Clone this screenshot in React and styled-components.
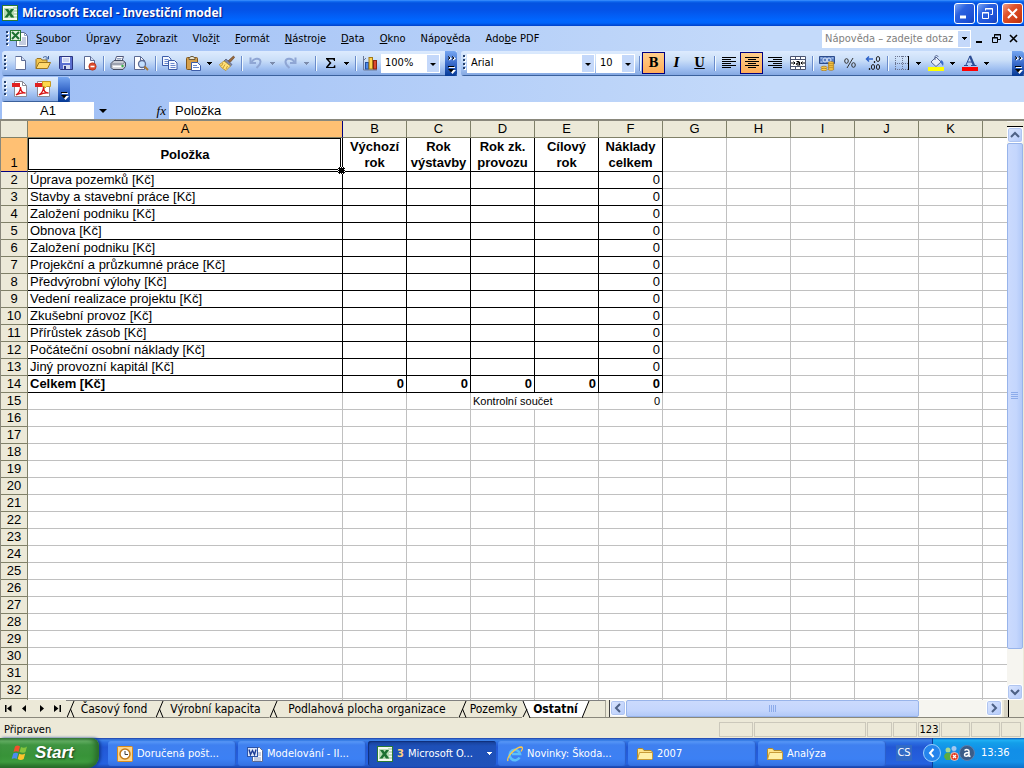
import React from 'react';
import styled, { createGlobalStyle, css } from 'styled-components';

const UI = '"DejaVu Sans Condensed", "DejaVu Sans", sans-serif';
const SHEET = '"Liberation Sans", Arial, sans-serif';

const Global = createGlobalStyle`
  * { box-sizing: border-box; }
  body { margin: 0; overflow: hidden; font: 11px/16px ${UI}; font-stretch: condensed; color: #000; }
  button, input, select { font: inherit; font-stretch: inherit; color: inherit; margin: 0; padding: 0; border: 0; border-radius: 0; background: none; }
  svg { display: block; flex: none; }
`;

const Window = styled.main`
  display: flex;
  flex-direction: column;
  height: 100vh;
  background: #ece9d8;
`;

const TitleBar = styled.header`
  flex: none;
  display: flex;
  align-items: center;
  gap: 4px;
  height: 26px;
  padding: 0 1px 0 2px;
  background: linear-gradient(#4a9aff 0, #1673f5 1px, #0453e0 3px, #0453e8 10px, #0066ff 20px, #0064fa 23px, #0040c8 26px);
`;
const Title = styled.h1`
  flex: 1;
  margin: 0;
  font: bold 12px/20px "Noto Sans", "Open Sans", sans-serif;
  color: #fff;
  text-shadow: 1px 1px 1px #0a1883;
`;
const Caption = styled.button`
  width: 21px;
  height: 21px;
  margin-left: ${p => (p.$close ? 2 : 0)}px;
  border: 1px solid #fff;
  border-radius: 3px;
  display: grid;
  place-items: center;
  background: ${p => p.$close
    ? 'linear-gradient(135deg, #f0a088 0, #e0532c 35%, #cc3a12 80%, #b03010 100%)'
    : 'linear-gradient(135deg, #7ba6f4 0, #2c62e0 35%, #1c4fd4 80%, #1640b0 100%)'};
`;
const CaptionGroup = styled.div`display: flex; gap: 2px;`;

const Docks = styled.div`
  flex: none;
  background: linear-gradient(90deg, #9ebef5, #c4dafa 75%);
`;
const MenuBar = styled.nav`
  display: flex;
  align-items: center;
  height: 25px;
  padding: 0 2px 0 4px;
`;
const MenuItem = styled.button`
  height: 20px;
  padding: 0 7px 0 8px;
  white-space: nowrap;
`;
const Spacer = styled.div`flex: 1;`;
const HelpBox = styled.div`
  display: flex;
  width: 149px;
  height: 18px;
  background: #fff;
  border: 1px solid #fff;
  input { flex: 1; min-width: 0; padding: 0 2px; outline: 0; }
  input::placeholder { color: #808080; opacity: 1; }
`;
const DropButton = styled.button`
  width: 12px;
  display: grid;
  place-items: center;
  background: #c4d8fa;
`;
const DocButton = styled.button`
  width: 17px;
  height: 17px;
  display: grid;
  place-items: center;
`;

const BarRow = styled.div`
  display: flex;
  gap: 4px;
  padding: 0 0 ${p => (p.$last ? 0 : 1)}px 2px;
`;
const Bar = styled.div`
  display: flex;
  align-items: center;
  flex: ${p => (p.$grow ? '1' : 'none')};
  height: 25px;
  padding-bottom: 1px;
  border-radius: 3px 0 0 3px;
  background: linear-gradient(#ddebfe 0, #cbdff8 9px, #a3c2f2 17px, #84a8e2 24px, #3b619c 24px);
`;
const GripBox = styled.span`
  width: 6px;
  height: 17px;
  padding-left: 2px;
  display: flex;
  align-items: center;
`;
const ToolButton = styled.button`
  width: 23px;
  height: 22px;
  display: grid;
  place-items: center;
  ${p => p.$on && css`
    border: 1px solid #000080;
    background: linear-gradient(#ffcf8c, #ffac58);
  `}
`;
const ToolArrow = styled.button`
  width: 11px;
  height: 22px;
  display: grid;
  place-items: center;
`;
const Sep = styled.span`
  width: 6px;
  height: 15px;
  display: flex;
  justify-content: center;
  &::before { content: ""; width: 1px; background: #6a8ccb; box-shadow: 1px 0 #f1f9ff; }
`;
const Combo = styled.div`
  position: relative;
  width: ${p => p.$width}px;
  height: 19px;
  margin-right: 1px;
  border: 1px solid #fff;
  background: #fff;
  select { width: 100%; height: 17px; padding-left: 3px; appearance: none; outline: 0; }
  svg { position: absolute; right: 0; top: 0; pointer-events: none; }
`;
const BarEnd = styled.button`
  align-self: flex-start;
  flex: none;
  width: 12px;
  height: 25px;
  margin-left: ${p => (p.$push ? 'auto' : '4px')};
  border-radius: 0 3px 3px 0;
  background: linear-gradient(#75a6f1, #3a6bcb 50%, #053995);
  display: grid;
  place-items: center;
`;

const FormulaBar = styled.div`
  display: flex;
  height: 19px;
  padding: 0 0 0 2px;
  border-bottom: 2px solid #8a887c;
  font: 13px/16px ${SHEET};
`;
const NameBox = styled.input`
  width: 92px;
  background: #fff;
  text-align: center;
  outline: 0;
`;
const NameDrop = styled.button`width: 18px; display: grid; place-items: center;`;
const FxButton = styled.button`
  width: 57px;
  padding: 0 3px 0 0;
  text-align: right;
  font: italic 13px/16px "Liberation Serif", serif;
`;
const FormulaInput = styled.input`
  flex: 1;
  min-width: 0;
  padding-left: 6px;
  background: #fff;
  outline: 0;
`;

const Work = styled.div`
  flex: 1;
  min-height: 0;
  display: flex;
  border-left: 1px solid #8a887c;
`;
const GridView = styled.div`
  flex: 1;
  min-width: 0;
  overflow: hidden;
  background: #fff;
`;
const Sheet = styled.table`
  table-layout: fixed;
  width: 1110px;
  border-collapse: separate;
  border-spacing: 0;
  font: 13px/16px ${SHEET};
`;
const Head = styled.th`
  height: ${p => (p.$tall ? 34 : 17)}px;
  padding: 0;
  vertical-align: bottom;
  font-weight: normal;
  background: ${p => (p.$on ? '#ffc073' : '#ece9d8')};
  border-right: 1px solid ${p => (p.$on && !p.$tall ? '#000080' : '#808068')};
  border-bottom: 1px solid ${p => (p.$on && p.$tall ? '#000080' : '#808068')};
`;
const Cell = styled.td`
  position: relative;
  height: 17px;
  padding: 0 2px;
  white-space: nowrap;
  text-align: ${p => p.$align || 'left'};
  font-weight: ${p => (p.$bold ? 'bold' : 'normal')};
  font-size: ${p => (p.$small ? 11 : 13)}px;
  border-right: 1px solid ${p => (p.$box ? '#000' : '#c0c0c0')};
  border-bottom: 1px solid ${p => (p.$box ? '#000' : '#c0c0c0')};
`;
const HeadingCell = styled(Cell)`
  padding: 0;
  font-weight: bold;
  text-align: center;
  height: 34px;
  white-space: ${p => (p.$picked ? 'nowrap' : 'pre-line')};
`;
const Selection = styled.span`
  position: absolute;
  inset: 0 1px 1px 0;
  border: 1px solid #000;
  &::after {
    content: "";
    position: absolute;
    right: -5px;
    bottom: -5px;
    width: 5px;
    height: 5px;
    background: #000;
    border: 1px dotted #fff;
    z-index: 2;
  }
`;

const VScroll = styled.div`
  flex: none;
  width: 17px;
  display: flex;
  flex-direction: column;
  background: #f6f5f0;
  border-right: 1px solid #ece9d8;
`;
const Splitter = styled.div`
  height: 5px;
  margin-top: 1px;
  background: #ece9d8;
  border-bottom: 1px solid #000;
`;
const ScrollButton = styled.button`
  flex: none;
  width: 16px;
  height: 16px;
  border: 1px solid #fff;
  border-radius: 3px;
  background: linear-gradient(135deg, #dbe6fe, #b4cafa);
  box-shadow: inset 0 0 0 1px #b0c5f0;
  display: grid;
  place-items: center;
`;
const Thumb = styled.div`
  flex: ${p => p.$share};
  border: 1px solid #98b4ea;
  border-radius: 2px;
  background: linear-gradient(${p => (p.$vertical ? '90deg' : '180deg')}, #cbdafd, #c4d6fd 60%, #b2c9f8);
  display: grid;
  place-items: center;
`;
const Track = styled.div`flex: ${p => p.$share};`;

const SheetBar = styled.div`
  flex: none;
  display: flex;
  height: 18px;
  border-bottom: 1px solid #8a887c;
  font-size: 12px;
`;
const NavButtons = styled.div`
  display: flex;
  width: 66px;
  button { flex: 1; display: grid; place-items: center; }
`;
const TabStrip = styled.div`
  display: flex;
  flex: none;
  width: 540px;
  border-right: 1px solid #a8a698;
  margin-right: 3px;
  border-top: 1px solid #808080;
`;
const Tab = styled.button`
  display: flex;
  width: ${p => p.$width}px;
  line-height: 16px;
  white-space: nowrap;
  font-weight: ${p => (p.$on ? 'bold' : 'normal')};
  background: ${p => (p.$on ? '#fff' : 'none')};
  span { flex: 1; text-align: center; margin: 0 -3px 0 -5px; }
`;
const HScroll = styled.div`
  flex: 1;
  display: flex;
  background: #f6f5f0;
  border-left: 1px solid #404040;
`;
const Corner = styled.div`
  width: 22px;
  padding-left: 2px;
  display: flex;
  &::before { content: ""; width: 4px; background: #d8d4c4; border-right: 1px solid #000; }
`;

const StatusBar = styled.footer`
  flex: none;
  display: flex;
  align-items: center;
  gap: 1px;
  height: 20px;
  padding: 4px 3px 1px 4px;
`;
const Pane = styled.span`
  width: ${p => p.$width}px;
  height: 15px;
  line-height: 13px;
  text-align: center;
  border: 1px solid #cbc8bb;
`;

const TaskBar = styled.nav`
  flex: none;
  display: flex;
  height: 30px;
  color: #fff;
  background: linear-gradient(#1f3fa6 0, #3d83e8 2px, #2b6be0 5px, #2258d5 9px, #245ddb 17px, #2562df 26px, #1941a5 30px);
`;
const Start = styled.button`
  width: 99px;
  display: flex;
  align-items: center;
  gap: 5px;
  padding-left: 11px;
  border-radius: 0 8px 12px 0;
  background: linear-gradient(#3a7a3c 0, #65b165 3px, #3e9440 7px, #389338 18px, #3d9a3e 24px, #246a26 30px);
  box-shadow: inset -4px 0 5px #2a6c2c, 2px 0 3px #123c98;
  font: italic bold 17px/26px "Liberation Sans", sans-serif;
  text-shadow: 1px 1px 2px #1c3c1c;
`;
const Tasks = styled.div`
  flex: 1;
  min-width: 0;
  display: flex;
  gap: 2px;
  padding: 3px 0 2px 9px;
`;
const Task = styled.button`
  width: 128px;
  display: flex;
  align-items: center;
  gap: 4px;
  padding: 0 4px 0 9px;
  border-radius: 3px;
  text-align: left;
  white-space: nowrap;
  background: ${p => (p.$on
    ? 'linear-gradient(#173f95, #1e50b8 5px, #1f52ba)'
    : 'linear-gradient(#5a9af8, #3f80f0 4px, #3c80f4 18px, #3470e0)')};
  box-shadow: ${p => (p.$on ? 'inset 1px 1px 1px #0f2f7a' : 'inset -1px 0 1px #2a5cc8')};
  b { color: #ffcf80; }
  span { flex: 1; }
`;
const Lang = styled.span`
  align-self: center;
  width: 16px;
  margin-right: 20px;
  background: #316ac5;
  text-align: center;
`;
const Tray = styled.div`
  display: flex;
  align-items: center;
  width: 92px;
  background: linear-gradient(#0c59b9 0, #1fb0f4 2px, #139ee9 5px, #118fe8 12px, #1290e8 24px, #0c6fc8 30px);
  box-shadow: inset 1px 0 #0a3f98;
  time { margin-left: 6px; }
`;
const TrayToggle = styled.button`margin-left: -10px; margin-right: 1px;`;

/* ---------- drawings ---------- */
const Svg = ({ w = 16, h = w, children, ...rest }) => (
  <svg width={w} height={h} viewBox={`0 0 ${w} ${h}`} fill="none" aria-hidden="true" {...rest}>{children}</svg>
);
const Down = ({ color = '#000' }) => <Svg w={5} h={3} shapeRendering="crispEdges"><path d="M0 0h5L2.5 3z" fill={color} /></Svg>;
const ComboArrow = () => (
  <Svg w={12} h={17}><path d="M0 0h12v17H0z" fill="#c4d8fa" /><path d="M3 8h6L6 11z" fill="#000" /></Svg>
);
const Grip = () => (
  <GripBox><Svg w={3} h={16} shapeRendering="crispEdges">
    {[0, 4, 8, 12].map(y => <g key={y}><path d={`M1 ${y + 1}h2v2h-2z`} fill="#fff" /><path d={`M0 ${y}h2v2h-2z`} fill="#27416d" /></g>)}
  </Svg></GripBox>
);
const MoreMark = ({ chevron }) => (
  <Svg w={9} h={21}>
    {chevron && <><path d="M2 4l2 1.500-2 1.500M6 4l2 1.500-2 1.500" stroke="#fff" strokeWidth="1.200" /><path d="M1 3.500l2 1.500-2 1.500M5 3.500l2 1.500-2 1.500" stroke="#000" /></>}
    <path d="M2 14.500h6" stroke="#fff" /><path d="M1 13.500h6" stroke="#000" />
    <path d="M2 17h7l-3.500 4z" fill="#fff" /><path d="M1 16h6l-3 3.500z" fill="#000" />
  </Svg>
);
const ExcelIcon = () => (
  <Svg><rect x=".5" y=".5" width="15" height="15" fill="#f4faf0" stroke="#2a7a34" />
    <path d="M11 3h4M11 6h4M11 9h4M11 12h4" stroke="#8fbf8f" /><rect x="2" y="3" width="10" height="10" fill="#b8dcb4" />
    <path d="M3 4h3.200l1.300 2L9 4h3L9.200 8l3 4.500H9L7.300 10l-1.800 2.500H2.500L5.800 8z" fill="#1d7031" /></Svg>
);
const ExcelDoc = () => (
  <Svg w={18} h={17}><path d="M6.500 2.500h8l3 3v11h-11z" fill="#fff" stroke="#5a6a92" /><path d="M14.500 2.500v3h3M12 8h4M12 10h4M9 12h7M9 14h7" stroke="#8a9ac2" />
    <rect x=".5" y=".5" width="10" height="10" fill="#e2f2df" stroke="#2a7a34" /><path d="M2 2l7 7M9 2L2 9" stroke="#1d7031" strokeWidth="2" /></Svg>
);
const page = <path d="M3.500 1.500h6l4 4v9h-10z" fill="#fff" stroke="#5b6a94" />;
const NewIcon = () => <Svg>{page}<path d="M9.500 1.500v4h4" fill="#cfdcf4" stroke="#5b6a94" /><path d="M3.500 1.500v13" stroke="#a8b8dc" /></Svg>;
const OpenIcon = () => (
  <Svg><path d="M1 13.500V4.500l1-1h4l1 1.500h5v3" fill="#f3c64e" stroke="#9a7420" /><path d="M1 13.500l3-6h11.500l-3 6z" fill="#ffd96e" stroke="#9a7420" /><path d="M8 2.500c2-1.500 4-1 5 1M13.500 1v3h-3" stroke="#3b5e9a" /></Svg>
);
const SaveIcon = () => (
  <Svg><path d="M1.500 1.500h13v13h-12l-1-1z" fill="#5b6fd0" stroke="#2b3580" /><rect x="4" y="2" width="8" height="6" fill="#eef2ff" /><path d="M5 4h6M5 6h6" stroke="#a8b4e0" /><rect x="5" y="10" width="7" height="4" fill="#d4daf0" /><rect x="6" y="11" width="2" height="3" fill="#2b3580" /></Svg>
);
const PermIcon = () => (
  <Svg>{page}<path d="M9.500 1.500v4h4" fill="#cfdcf4" stroke="#5b6a94" /><circle cx="11.500" cy="11.500" r="3.700" fill="#dc4a2c" stroke="#a82c14" strokeWidth=".6" /><path d="M9.500 11.500h4" stroke="#fff" strokeWidth="1.600" /></Svg>
);
const PrintIcon = () => (
  <Svg><path d="M5 6l1.500-4.500h7L12 6" fill="#fff" stroke="#51597c" /><path d="M7 3.500h4.500M6.500 5h4.500" stroke="#90a0c0" /><path d="M1 8.500l3-3h9l2.500 2v4l-2.500 3H3l-2-2z" fill="#c9ccd4" stroke="#454c62" /><path d="M1.500 9h11l2.500-2" stroke="#70788c" /><path d="M3 11.500h9" stroke="#fff" strokeWidth="1.500" /><circle cx="12.500" cy="11" r="1.200" fill="#39b54a" /></Svg>
);
const PreviewIcon = () => (
  <Svg><path d="M1.500 1.500h6l4 4v9h-10z" fill="#fff" stroke="#5b6a94" /><path d="M7.500 1.500v4h4" stroke="#5b6a94" /><circle cx="9" cy="9" r="3.500" fill="#c4e0ff" stroke="#5b6a94" strokeWidth="1.300" /><path d="M11.500 11.500l3.500 3.500" stroke="#a87834" strokeWidth="2" /></Svg>
);
const CopyIcon = () => (
  <Svg>{[[.5, 1.500], [6.500, 5.500]].map(([x, y]) => (
    <g key={x} transform={`translate(${x} ${y})`}><path d="M0 0h6l2.500 2.500V9H0z" fill="#f4f8ff" stroke="#3c5ca8" /><path d="M2 3h4M2 5h5M2 7h5" stroke="#6a88cc" /></g>
  ))}</Svg>
);
const PasteIcon = () => (
  <Svg><rect x="1.500" y="2.500" width="11" height="12" rx="1" fill="#d6a04a" stroke="#80561c" /><path d="M4 4.500V3l2-1.500h2L10 3v1.500z" fill="#e9e4d0" stroke="#6a5a3c" /><path d="M6.500 7.500h6l3 3v5h-9z" fill="#fff" stroke="#3c5ca8" /><path d="M8 10.500h4M8 12.500h6" stroke="#6a88cc" /></Svg>
);
const BrushIcon = () => (
  <Svg><path d="M14.500 1l1 1.500-4.500 5-2-1.500z" fill="#9a6a3c" stroke="#6a4422" strokeWidth=".7" /><path d="M7 4l6 5.500-1.500 1.500L5 6z" fill="#8088a4" stroke="#4c526e" strokeWidth=".7" /><path d="M5 6l6.500 5-4.500 4.500C4 14 1.500 12 .5 9.500z" fill="#ffe27a" stroke="#b08a2c" strokeWidth=".8" /><path d="M4 8l-1.500 3M6 9.500L4 13M8.500 11L7 14" stroke="#c89a30" /></Svg>
);
const UndoIcon = ({ flip }) => (
  <Svg transform={flip ? 'scale(-1 1)' : undefined}><path d="M3.500 7C6 3 12 2.500 12.500 6.500c.3 3-2 4.500-4 6.500" stroke="#8fa6d4" strokeWidth="2" /><path d="M2.500 2.500V8H8" stroke="#8fa6d4" strokeWidth="2" /></Svg>
);
const SigmaIcon = () => <Svg><path d="M4 3h9v3h-1c-.2-1.300-.8-1.600-2-1.600H6.500L9.500 8l-3.500 4h4.300c1.200 0 1.700-.5 2-1.800h1V13H4v-1l3.500-4.200L4 4z" fill="#000" /></Svg>;
const ChartIcon = () => (
  <Svg><path d="M1.500 1v14H15" stroke="#6b7896" /><path d="M1.500 5.500L4 3" stroke="#6b7896" />
    <rect x="3.500" y="7.500" width="3" height="6.500" fill="#4a86e8" stroke="#24509c" /><rect x="7" y="2.500" width="3.500" height="11.500" fill="#ffd34e" stroke="#a07818" /><rect x="11.500" y="5.500" width="3" height="8.500" fill="#dc4a2c" stroke="#8c2410" /></Svg>
);
const Letter = styled.span`
  font: bold 12px/16px "DejaVu Serif", "Liberation Serif", serif;
  font-style: ${p => (p.$italic ? 'italic' : 'normal')};
  text-decoration: ${p => (p.$under ? 'underline' : 'none')};
`;
const AlignIcon = ({ rows }) => (
  <Svg shapeRendering="crispEdges"><path d={rows.map(([x, w], i) => `M${x} ${2.5 + i * 2}h${w}`).join('')} stroke="#000" /></Svg>
);
const LEFT = [[1, 14], [1, 9], [1, 14], [1, 9], [1, 14], [1, 9]];
const CENTER = [[1, 14], [4, 8], [1, 14], [4, 8], [1, 14], [4, 8]];
const RIGHT = [[1, 14], [6, 9], [1, 14], [6, 9], [1, 14], [6, 9]];
const MergeIcon = () => (
  <Svg><path d="M.5 1.500h15v13H.5zM.5 4.500h15M.5 11.500h15M5.500 1.500v3M10.500 1.500v3M5.500 11.500v3M10.500 11.500v3" fill="#fff" stroke="#4a5470" /><path d="M1 8h4M11 8h4M3.500 6.500L5 8 3.500 9.500M12.500 6.500L11 8l1.500 1.500" stroke="#000" /><path d="M6.500 6.500h2l1 1v2.500h-2l-1-1 1-1h2" stroke="#000" strokeWidth="1.200" /></Svg>
);
const MoneyIcon = () => (
  <Svg><path d="M.5 1.500h15v7H.5z" fill="#5a80c4" stroke="#2c4c8c" /><circle cx="6" cy="5" r="2" fill="#5a80c4" stroke="#dce8fc" /><circle cx="10" cy="5" r="2" stroke="#dce8fc" /><path d="M1.500 3h2M12.500 3h2M1.500 7h2" stroke="#c4d8fa" />
    {[[12, 8], [12, 10], [12, 12], [12, 14], [5, 12.500], [5, 14.500]].map(([x, y]) => <ellipse key={`${x}-${y}`} cx={x} cy={y} rx="3" ry="1.300" fill="#ffcf4a" stroke="#a87414" strokeWidth=".7" />)}</Svg>
);
const PercentIcon = () => <Svg><ellipse cx="4.500" cy="6" rx="1.800" ry="2.300" stroke="#333" /><ellipse cx="11.500" cy="10" rx="1.800" ry="2.300" stroke="#333" /><path d="M11 3L5 13" stroke="#333" /></Svg>;
const DecimalIcon = () => (
  <Svg><path d="M8 4H1.500M4 1.500L1.500 4 4 6.500" stroke="#2c62c8" strokeWidth="1.500" /><ellipse cx="13" cy="4" rx="1.700" ry="2.500" stroke="#222" /><path d="M9.500 6v2M4.500 13v2" stroke="#222" strokeWidth="1.300" /><ellipse cx="8" cy="12" rx="1.600" ry="2.500" stroke="#222" /><ellipse cx="13" cy="12" rx="1.600" ry="2.500" stroke="#222" /></Svg>
);
const BorderIcon = () => <Svg shapeRendering="crispEdges"><path d="M1 1.500h13M1 8h13M1 14.500h13M1.500 1v14M8 1v14" stroke="#6a7490" strokeDasharray="1 1" /><path d="M14.500 1v14" stroke="#000" /></Svg>;
const FillIcon = () => (
  <Svg><path d="M3 7l5-5 5 5-5 4.500z" fill="#e6edf8" stroke="#566690" /><path d="M7 5V2c0-2 3-2 3 0" stroke="#566690" /><path d="M13 5c2.500 1 3 3 2 6-1-1-1.500-3-3-4z" fill="#3a6bcb" /><path d="M0 12h16v4H0z" fill="#ffff00" /></Svg>
);
const ColorIcon = () => <Svg><path d="M8 .8L4 10" stroke="#2c4c94" /><path d="M8 1l4 9.500" stroke="#2c4c94" strokeWidth="2.200" /><path d="M5.500 7h5M2 10.500h4M9 10.500h5.500" stroke="#2c4c94" /><path d="M0 12h16v4H0z" fill="#ff0000" /></Svg>;
const PdfIcon = ({ note }) => (
  <Svg><path d="M2.500.5h8l4 4v11h-12z" fill="#fff" stroke="#8a8a94" /><path d="M10.500.5v4h4" stroke="#8a8a94" /><path d="M0 2h8v4H0z" fill="#e02020" />
    <path d="M4 14c3-2 4.500-5 4.500-8 0 4 2 6 5 6-3.500-.5-6.500.5-9.500 2z" stroke="#d81818" strokeWidth="1.300" />
    {note && <path d="M7.500.5h8v5h-4l-2 2v-2h-2z" fill="#ffd84a" stroke="#c89a20" />}</Svg>
);
const Chevron = ({ d }) => <Svg w={10}><path d={d} stroke="#4d6185" strokeWidth="2" /></Svg>;
const GripLines = ({ vertical }) => (
  <Svg w={8}><path d={vertical ? 'M0 .5h7M0 2.500h7M0 4.500h7M0 6.500h7' : 'M.5 0v7M2.500 0v7M4.500 0v7M6.500 0v7'} stroke="#8cabea" /></Svg>
);
const Slash = ({ kind }) => (
  <Svg w={9} h={17}>
    {kind === 'back'
      ? <><path d="M0 0l8 17H0z" fill="#ece9d8" /><path d="M1 0l7 17M5 8L1 16" stroke="#000" /></>
      : <><path d="M0 0h8L1 17H0z" fill="#ece9d8" /><path d="M8 0L1 16.500M4.500 8l3.500 8.500" stroke="#000" /></>}
  </Svg>
);
const FlagIcon = () => (
  <Svg w={19} h={18}><path d="M4 2.500C6 1 7.500 1.500 9 2.500L7.500 8C6 7 4.500 7 2.500 8z" fill="#f0502c" /><path d="M10 3c2 1.200 4 1 6-.5L14.500 8c-2 1.200-4 1-6 0z" fill="#84c43c" /><path d="M2.200 9.500c2-1 3.500-1 5 0L5.700 15c-1.500-1-3-1-5 0z" fill="#4a8cf0" /><path d="M8.200 9.700c2 1 4 1 6-.2l-1.500 5.500c-2 1.200-4 1.200-6 0z" fill="#fcc42c" /></Svg>
);
const ClockIcon = () => <Svg><rect x=".5" y=".5" width="15" height="15" rx="1" fill="#ffd68a" stroke="#d88c1c" /><circle cx="8" cy="8" r="5" fill="#fff" stroke="#c07a1c" strokeWidth="1.500" /><path d="M8 5v3.500h3" stroke="#404040" /></Svg>;
const WordIcon = () => (
  <Svg><path d="M5.500 1.500h7l3 3v11h-10z" fill="#fff" stroke="#5a6a92" /><path d="M11 7h3M11 9h3M7 12h7M7 14h7" stroke="#8a9ac2" /><rect x=".5" y="1.500" width="10" height="9" fill="#dce6fa" stroke="#2c54a8" /><path d="M2 3.500L3.500 8.500l2-4 2 4L9 3.500" stroke="#1c3c94" strokeWidth="1.400" /></Svg>
);
const IeIcon = () => (
  <Svg><path d="M12.500 11.500A5.200 5.200 0 1 1 13 8H5" stroke="#5cc0fa" strokeWidth="2.600" /><path d="M1 15C-1 11 9 1 14.500 1c2 .5.500 3-.5 4.500" stroke="#fcc84a" strokeWidth="1.300" /></Svg>
);
const FolderIcon = () => <Svg><path d="M.5 13.500v-10l1-1h4l1.500 2h7l1 1v8z" fill="#ffe48a" stroke="#b08a2c" /><path d="M.5 13.500l2-7h13v6l-1 1z" fill="#fff0a8" stroke="#c89c38" /></Svg>;
const ToggleIcon = () => <Svg w={20}><circle cx="10" cy="10" r="8.500" fill="#2484ec" stroke="#9ad0fc" /><path d="M11.500 6L8 10l3.500 4" stroke="#fff" strokeWidth="2" /></Svg>;
const BuddyIcon = () => (
  <Svg><circle cx="5" cy="5" r="2.500" fill="#a4d890" /><circle cx="11" cy="3.500" r="2.500" fill="#a4c8f0" /><path d="M1 12c0-6 8-6 8 0l-2 3H3z" fill="#5aac40" /><path d="M8 8c2-3 6-2 6 3" fill="#6a94d0" /><circle cx="11.500" cy="11.500" r="4" fill="#e43c20" stroke="#fff" strokeWidth=".6" /><path d="M10 10l3 3M13 10l-3 3" stroke="#fff" strokeWidth="1.300" /></Svg>
);
const AvastIcon = () => (
  <Svg><circle cx="8" cy="8" r="7.500" fill="#3a5c88" stroke="#5c80b0" /><path d="M5.500 5.500c2-1.500 4.500-1 4.500 1V11l1.500.5M10 7.500c-3 0-4.500 1-4.500 2.500s3 2 4.500-.5" stroke="#fff" strokeWidth="1.500" /></Svg>
);

/* ---------- data ---------- */
const MENUS = [['', 'S', 'oubor'], ['Úpr', 'a', 'vy'], ['', 'Z', 'obrazit'], ['Vlož', 'i', 't'], ['', 'F', 'ormát'], ['', 'N', 'ástroje'], ['', 'D', 'ata'], ['', 'O', 'kno'], ['Nápo', 'v', 'ěda'], ['Ado', 'b', 'e PDF']];
const COLUMNS = ['A', 'B', 'C', 'D', 'E', 'F', 'G', 'H', 'I', 'J', 'K', ''];
const HEADINGS = ['Výchozí\nrok', 'Rok\nvýstavby', 'Rok zk.\nprovozu', 'Cílový\nrok', 'Náklady\ncelkem'];
const ITEMS = ['Úprava pozemků [Kč]', 'Stavby a stavební práce [Kč]', 'Založení podniku [Kč]', 'Obnova [Kč]', 'Založení podniku [Kč]', 'Projekční a průzkumné práce [Kč]', 'Předvýrobní výlohy [Kč]', 'Vedení realizace projektu [Kč]', 'Zkušební provoz [Kč]', 'Přírůstek zásob [Kč]', 'Počáteční osobní náklady [Kč]', 'Jiný provozní kapitál [Kč]'];
const TABS = [['Časový fond', 89], ['Výrobní kapacita', 114], ['Podlahová plocha organizace', 189], ['Pozemky', 64], ['Ostatní', 60]];
const TASKS = [
  { icon: <ClockIcon />, label: 'Doručená pošt...' },
  { icon: <WordIcon />, label: 'Modelování - II...' },
  { icon: <ExcelIcon />, label: 'Microsoft O...', count: 3 },
  { icon: <IeIcon />, label: 'Novinky: Škoda...' },
  { icon: <FolderIcon />, label: '2007' },
  { icon: <FolderIcon />, label: 'Analýza' },
];
const PANES = [['', 34], ['', 112], ['', 25], ['', 24], ['123', 22], ['', 29], ['', 29], ['', 20]];

const Tool = ({ label, on, arrow, dim, children }) => (
  <>
    <ToolButton aria-label={label} aria-pressed={on} $on={on}>{children}</ToolButton>
    {arrow && <ToolArrow aria-label={`${label} – možnosti`}><Down color={dim ? '#7c8cac' : '#000'} /></ToolArrow>}
  </>
);
const Picker = ({ label, value, width }) => (
  <Combo $width={width}>
    <select aria-label={label} defaultValue={value}><option>{value}</option></select>
    <ComboArrow />
  </Combo>
);
const blanks = n => Array.from({ length: n }, (_, i) => <Cell key={`blank${i}`} />);

function SheetRow({ number }) {
  if (number === 1) {
    return (
      <tr>
        <Head scope="row" $on $tall>1</Head>
        <HeadingCell $box $picked>Položka<Selection /></HeadingCell>
        {HEADINGS.map(h => <HeadingCell key={h} $box>{h}</HeadingCell>)}
        {blanks(6)}
      </tr>
    );
  }
  const head = <Head scope="row">{number <= 32 ? number : ''}</Head>;
  if (number <= 13) {
    return (
      <tr>{head}<Cell $box>{ITEMS[number - 2]}</Cell>
        {[1, 2, 3, 4].map(i => <Cell key={i} $box />)}
        <Cell $box $align="right">0</Cell>{blanks(6)}</tr>
    );
  }
  if (number === 14) {
    return (
      <tr>{head}<Cell $box $bold>Celkem [Kč]</Cell>
        {[1, 2, 3, 4, 5].map(i => <Cell key={i} $box $bold $align="right">0</Cell>)}{blanks(6)}</tr>
    );
  }
  if (number === 15) {
    return (
      <tr>{head}{blanks(3)}<Cell colSpan={2} $small>Kontrolní součet</Cell><Cell $small $align="right">0</Cell>{blanks(6)}</tr>
    );
  }
  return <tr>{head}{blanks(12)}</tr>;
}

export default function App() {
  return (
    <Window>
      <Global />
      <TitleBar>
        <ExcelIcon />
        <Title>Microsoft Excel - Investiční model</Title>
        <CaptionGroup>
          <Caption aria-label="Minimalizovat"><Svg w={13}><path d="M2 10h6" stroke="#fff" strokeWidth="3" /></Svg></Caption>
          <Caption aria-label="Obnovit"><Svg w={13}><path d="M4.500 3.500v-2h7v6h-2M4 2h8M1.500 5.500h6v6h-6zM1 6h7" stroke="#fff" /></Svg></Caption>
          <Caption aria-label="Zavřít" $close><Svg w={13}><path d="M2 2l9 9M11 2l-9 9" stroke="#fff" strokeWidth="2" /></Svg></Caption>
        </CaptionGroup>
      </TitleBar>

      <Docks>
        <MenuBar>
          <Grip /><ExcelDoc />
          {MENUS.map(([a, key, b]) => <MenuItem key={a + key + b}>{a}<u>{key}</u>{b}</MenuItem>)}
          <Spacer />
          <HelpBox><input aria-label="Nápověda" placeholder="Nápověda – zadejte dotaz" /><DropButton aria-label="Dotazy"><Down /></DropButton></HelpBox>
          <DocButton aria-label="Minimalizovat sešit"><Svg w={9}><path d="M1 8h6" stroke="#000" strokeWidth="2" /></Svg></DocButton>
          <DocButton aria-label="Obnovit sešit"><Svg w={9}><path d="M2.500 3V.5h6v5H6M2 1h7M.5 3.500h5v5h-5zM0 4h6" stroke="#000" /></Svg></DocButton>
          <DocButton aria-label="Zavřít sešit"><Svg w={9}><path d="M1 1l7 7M8 1L1 8" stroke="#000" strokeWidth="1.600" /></Svg></DocButton>
        </MenuBar>

        <BarRow>
          <Bar>
            <Grip />
            <Tool label="Nový"><NewIcon /></Tool>
            <Tool label="Otevřít"><OpenIcon /></Tool>
            <Tool label="Uložit"><SaveIcon /></Tool>
            <Tool label="Oprávnění"><PermIcon /></Tool>
            <Sep />
            <Tool label="Tisk"><PrintIcon /></Tool>
            <Tool label="Náhled"><PreviewIcon /></Tool>
            <Sep />
            <Tool label="Kopírovat"><CopyIcon /></Tool>
            <Tool label="Vložit" arrow><PasteIcon /></Tool>
            <Tool label="Kopírovat formát"><BrushIcon /></Tool>
            <Sep />
            <Tool label="Zpět" arrow dim><UndoIcon /></Tool>
            <Tool label="Znovu" arrow dim><UndoIcon flip /></Tool>
            <Sep />
            <Tool label="Součet" arrow><SigmaIcon /></Tool>
            <Sep />
            <Tool label="Průvodce grafem"><ChartIcon /></Tool>
            <Picker label="Lupa" value="100%" width={59} />
            <BarEnd aria-label="Možnosti panelu"><MoreMark chevron /></BarEnd>
          </Bar>
          <Bar $grow>
            <Grip />
            <Picker label="Písmo" value="Arial" width={128} />
            <Picker label="Velikost písma" value="10" width={39} />
            <Sep />
            <Tool label="Tučné" on><Letter>B</Letter></Tool>
            <Tool label="Kurzíva"><Letter $italic>I</Letter></Tool>
            <Tool label="Podtržené"><Letter $under>U</Letter></Tool>
            <Sep />
            <Tool label="Vlevo"><AlignIcon rows={LEFT} /></Tool>
            <Tool label="Na střed" on><AlignIcon rows={CENTER} /></Tool>
            <Tool label="Vpravo"><AlignIcon rows={RIGHT} /></Tool>
            <Tool label="Sloučit"><MergeIcon /></Tool>
            <Sep />
            <Tool label="Měna"><MoneyIcon /></Tool>
            <Tool label="Procenta"><PercentIcon /></Tool>
            <Tool label="Přidat desetinné místo"><DecimalIcon /></Tool>
            <Sep />
            <Tool label="Ohraničení" arrow><BorderIcon /></Tool>
            <Tool label="Barva výplně" arrow><FillIcon /></Tool>
            <Tool label="Barva písma" arrow><ColorIcon /></Tool>
            <BarEnd $push aria-label="Možnosti panelu"><MoreMark chevron /></BarEnd>
          </Bar>
        </BarRow>
        <BarRow $last>
          <Bar>
            <Grip />
            <Tool label="Převést do PDF"><PdfIcon /></Tool>
            <Tool label="Převést do PDF a odeslat"><PdfIcon note /></Tool>
            <BarEnd aria-label="Možnosti panelu"><MoreMark /></BarEnd>
          </Bar>
        </BarRow>
        <FormulaBar>
          <NameBox aria-label="Pole názvů" defaultValue="A1" />
          <NameDrop aria-label="Seznam názvů"><Svg w={8} h={4}><path d="M0 0h8L4 4z" fill="#000" /></Svg></NameDrop>
          <FxButton aria-label="Vložit funkci">fx</FxButton>
          <FormulaInput aria-label="Řádek vzorců" defaultValue="Položka" />
        </FormulaBar>
      </Docks>

      <Work>
        <GridView>
          <Sheet>
            <colgroup>
              <col width="27" /><col width="315" />
              {Array.from({ length: 12 }, (_, i) => <col key={i} width="64" />)}
            </colgroup>
            <thead>
              <tr><Head />{COLUMNS.map((c, i) => <Head key={i} scope="col" $on={c === 'A'}>{c}</Head>)}</tr>
            </thead>
            <tbody>{Array.from({ length: 33 }, (_, i) => <SheetRow key={i} number={i + 1} />)}</tbody>
          </Sheet>
        </GridView>
        <VScroll>
          <Splitter />
          <ScrollButton aria-label="Nahoru"><Chevron d="M1 7l4-4 4 4" /></ScrollButton>
          <Thumb $vertical $share={506}><GripLines vertical /></Thumb>
          <Track $share={35} />
          <ScrollButton aria-label="Dolů"><Chevron d="M1 3l4 4 4-4" /></ScrollButton>
        </VScroll>
      </Work>

      <SheetBar>
        <NavButtons>
          <button aria-label="První list"><Svg w={7}><path d="M0 0h1.500v7H0zM6.500 0v7L2 3.500z" fill="#000" /></Svg></button>
          <button aria-label="Předchozí list"><Svg w={7}><path d="M5 0v7L1 3.500z" fill="#000" /></Svg></button>
          <button aria-label="Další list"><Svg w={7}><path d="M2 0v7l4-3.500z" fill="#000" /></Svg></button>
          <button aria-label="Poslední list"><Svg w={7}><path d="M0 0v7l4.500-3.500zM5.500 0H7v7H5.500z" fill="#000" /></Svg></button>
        </NavButtons>
        <TabStrip>
          {TABS.map(([name, width], i) => (
            <Tab key={name} $width={width} $on={i === 4}>
              <Slash kind={i === 4 ? 'back' : 'fore'} /><span>{name}</span>
            </Tab>
          ))}
          <Svg w={9} h={17}><path d="M0 0h7L0 17z" fill="#fff" /><path d="M7 0L0 17" stroke="#000" /></Svg>
        </TabStrip>
        <HScroll>
          <ScrollButton aria-label="Vlevo"><Chevron d="M7 1L3 5l4 4" /></ScrollButton>
          <Thumb $share={291}><GripLines /></Thumb>
          <Track $share={67} />
          <ScrollButton aria-label="Vpravo"><Chevron d="M3 1l4 4-4 4" /></ScrollButton>
        </HScroll>
        <Corner />
      </SheetBar>

      <StatusBar>
        <span>Připraven</span>
        <Spacer />
        {PANES.map(([text, width], i) => <Pane key={i} $width={width}>{text}</Pane>)}
      </StatusBar>

      <TaskBar>
        <Start><FlagIcon />Start</Start>
        <Tasks>
          {TASKS.map(t => (
            <Task key={t.label} $on={!!t.count}>
              {t.icon}{t.count && <b>{t.count}</b>}<span>{t.label}</span>{t.count && <Down color="#fff" />}
            </Task>
          ))}
        </Tasks>
        <Lang>CS</Lang>
        <Tray>
          <TrayToggle aria-label="Zobrazit skryté ikony"><ToggleIcon /></TrayToggle>
          <BuddyIcon /><AvastIcon />
          <time>13:36</time>
        </Tray>
      </TaskBar>
    </Window>
  );
}
